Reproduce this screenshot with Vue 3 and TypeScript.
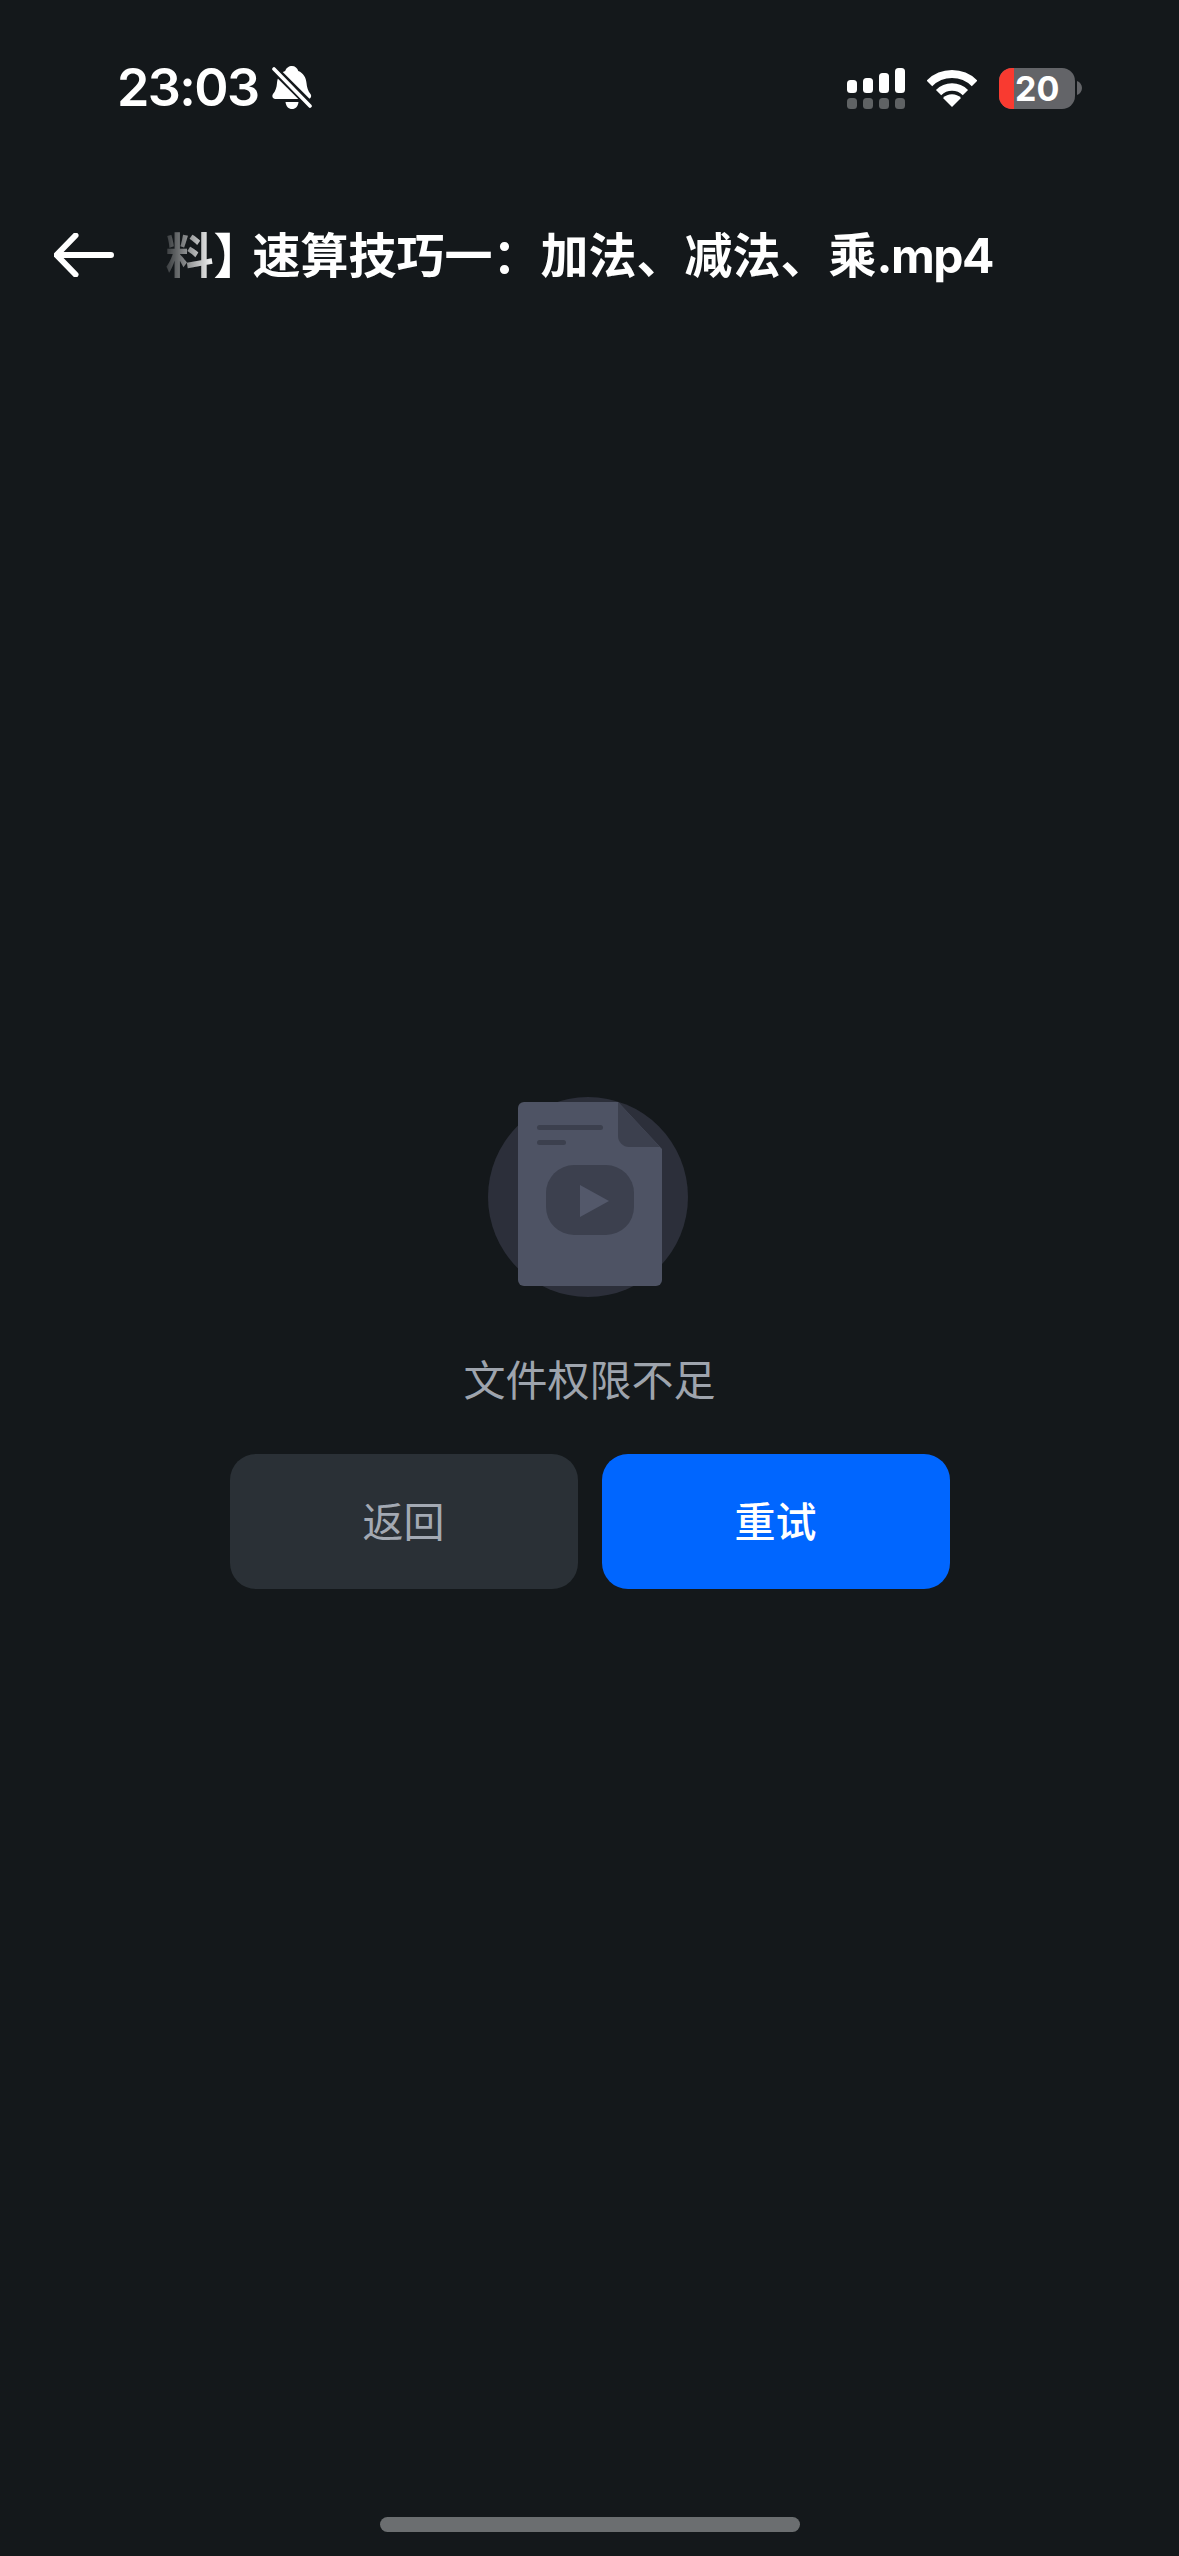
<script setup lang="ts">
const titleLead = '料';
const titleBracket = '】';
const titleHead = '速算技巧一：加法、减法、乘';
const titleExt = '.mp4';
const message = '文件权限不足';
const signalBars = [
  { x: 0, y: 12, h: 13 },
  { x: 16, y: 10, h: 15 },
  { x: 32, y: 5, h: 20 },
  { x: 48, y: 0, h: 25 },
];
</script>

<template>
  <div class="page">
    <div class="status-bar">
      <div class="status-left">
        <span class="time">23:03</span>
        <svg class="bell" width="40" height="44" viewBox="0 0 40 44">
          <path
            d="M20 0c3 0 5.500 2 6.300 5 5 2 7.700 6.500 8.200 12 .4 4.500 1.500 8 4 11 1.400 1.800.6 5-2.500 5H3.500c-3 0-3.900-3.200-2.500-5 2.500-3 3.700-6.500 4-11 .5-5.500 3.200-10 8.200-12C14 2 17 0 20 0z"
            fill="#fff"
          />
          <path d="M13.500 36h13c-.5 4.500-3 7-6.500 7s-6-2.500-6.500-7z" fill="#fff" />
          <path d="M-1 0 42 43" stroke="#14181b" stroke-width="8" />
          <path d="M2 3 38 40" stroke="#fff" stroke-width="3.600" stroke-linecap="round" />
        </svg>
      </div>
      <div class="status-right">
        <svg class="signal" width="58" height="41" viewBox="0 0 58 41">
          <rect
            v-for="bar in signalBars"
            :key="bar.x"
            :x="bar.x"
            :y="bar.y"
            width="10"
            :height="bar.h"
            rx="3.500"
            fill="#fff"
          />
          <rect
            v-for="bar in signalBars"
            :key="'dim' + bar.x"
            :x="bar.x"
            y="30"
            width="10"
            height="11"
            rx="3.500"
            fill="#fff"
            opacity="0.32"
          />
        </svg>
        <svg class="wifi" width="50" height="38" viewBox="0 0 50 38" fill="none">
          <path d="M2.400 14.400a32 32 0 0 1 45.200 0" stroke="#fff" stroke-width="8" />
          <path d="M11.600 23.600a19 19 0 0 1 26.800 0" stroke="#fff" stroke-width="7.500" />
          <path d="M25 38 16 29a12.700 12.700 0 0 1 18 0z" fill="#fff" />
        </svg>
        <div class="battery">
          <div class="battery-body">
            <span class="battery-fill"></span>
            <span class="battery-level">20</span>
          </div>
          <svg width="5" height="14" viewBox="0 0 5 14">
            <path d="M0 0c3 1 5 4 5 7s-2 6-5 7z" fill="#636468" />
          </svg>
        </div>
      </div>
    </div>

    <div class="header">
      <svg class="back" width="60" height="44" viewBox="0 0 60 44" fill="none">
        <path
          d="M21.500 2.500 2.500 22l19 19.500M3 22h54"
          stroke="#fff"
          stroke-width="6"
          stroke-linecap="round"
          stroke-linejoin="round"
        />
      </svg>
      <div class="title-clip">
        <span class="title">{{ titleLead }}<span class="title-bracket">{{ titleBracket }}</span>{{ titleHead }}<span class="title-ext">{{ titleExt }}</span></span>
      </div>
    </div>

    <div class="main">
      <svg class="file-icon" width="200" height="200" viewBox="0 0 200 200">
        <circle cx="100" cy="100" r="100" fill="#2c2f3a" />
        <path
          d="M36 5h94l44 47v131a6 6 0 0 1-6 6H36a6 6 0 0 1-6-6V11a6 6 0 0 1 6-6z"
          fill="#4e5364"
        />
        <path d="M130 5l42 45h-31c-6 0-11-5-11-11z" fill="#3c404e" />
        <rect x="49" y="28" width="66" height="5" rx="2.500" fill="#3c404e" />
        <rect x="49" y="43" width="29" height="5" rx="2.500" fill="#3c404e" />
        <rect x="58" y="68" width="88" height="70" rx="28" fill="#3c404e" />
        <path d="M92 88v32l29-16z" fill="#53586a" />
      </svg>
      <p class="message">{{ message }}</p>
      <div class="actions">
        <button class="btn btn-back" type="button">返回</button>
        <button class="btn btn-retry" type="button">重试</button>
      </div>
    </div>

    <div class="home-bar"></div>
  </div>
</template>

<style scoped>
.page {
  width: 1179px;
  height: 2556px;
  display: flex;
  flex-direction: column;
  background: #14181b;
  overflow: hidden;
  font-family: Inter, "Noto Sans CJK SC", sans-serif;
}
.status-bar {
  height: 176px;
  display: flex;
  align-items: center;
  justify-content: space-between;
  padding: 0 97px 0 117px;
  box-sizing: border-box;
}
.status-left {
  display: flex;
  align-items: center;
  gap: 14px;
}
.time {
  color: #fff;
  font-size: 52px;
  font-weight: 600;
  letter-spacing: -1.6px;
  line-height: 60px;
}
.bell {
  display: block;
}
.status-right {
  display: flex;
  align-items: center;
  gap: 22px;
}
.signal,
.wifi {
  display: block;
}
.battery {
  display: flex;
  align-items: center;
  gap: 2px;
}
.battery-body {
  position: relative;
  width: 76px;
  height: 41px;
  display: flex;
  align-items: center;
  padding-left: 16px;
  box-sizing: border-box;
  border-radius: 13px;
  background: #636468;
  overflow: hidden;
}
.battery-fill {
  position: absolute;
  left: 0;
  top: 0;
  bottom: 0;
  width: 15px;
  background: #f93a30;
}
.battery-level {
  position: relative;
  color: #fff;
  font-size: 34px;
  font-weight: 700;
  line-height: 41px;
}
.header {
  height: 158px;
  display: flex;
  align-items: center;
  box-sizing: border-box;
  padding-left: 54px;
}
.back {
  display: block;
  flex: none;
}
.title-clip {
  width: 836px;
  margin-left: 43px;
  padding-top: 2px;
  display: flex;
  justify-content: flex-end;
  overflow: hidden;
  -webkit-mask-image: linear-gradient(to right, transparent, #000 58px);
  mask-image: linear-gradient(to right, transparent, #000 58px);
}
.title {
  color: #fff;
  font-size: 48px;
  font-weight: 700;
  line-height: 64px;
  white-space: nowrap;
}
.title-bracket {
  letter-spacing: -9px;
}
.title-ext {
  letter-spacing: -1.5px;
}
.main {
  flex: 1;
  display: flex;
  flex-direction: column;
  align-items: center;
  padding-top: 763px;
}
.file-icon {
  display: block;
  margin-left: -3px;
}
.message {
  margin: 56px 0 0;
  color: #9ea4ad;
  font-size: 42px;
  line-height: 56px;
}
.actions {
  display: flex;
  gap: 24px;
  margin-top: 45px;
}
.btn {
  width: 348px;
  height: 135px;
  padding: 0 0 6px;
  border: none;
  border-radius: 26px;
  font-family: inherit;
  font-size: 41px;
}
.btn-back {
  background: #2a3036;
  color: #a3a9b3;
}
.btn-retry {
  background: #0066ff;
  color: #fff;
  font-weight: 500;
}
.home-bar {
  width: 420px;
  height: 15px;
  margin: 0 auto 24px;
  border-radius: 8px;
  background: #6b6e70;
}
</style>
